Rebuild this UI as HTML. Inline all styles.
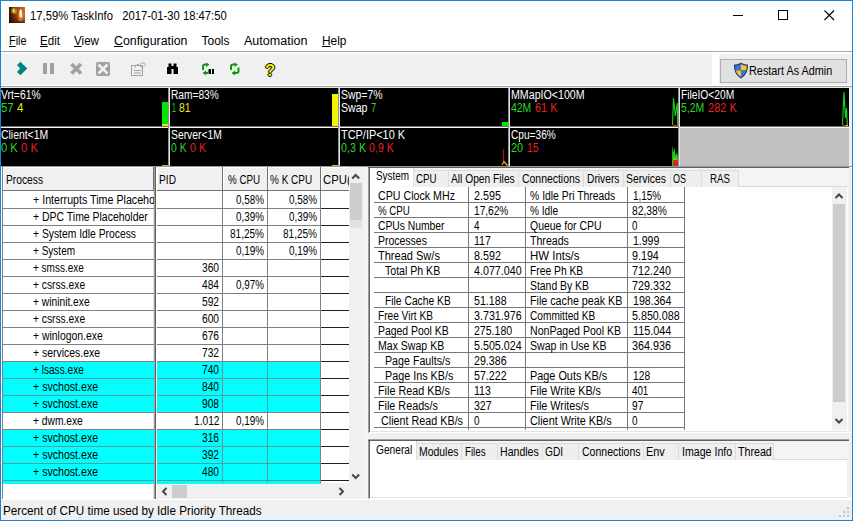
<!DOCTYPE html>
<html lang="en"><head><meta charset="utf-8"><title>TaskInfo</title>
<style>
html,body{margin:0;padding:0;}
body{width:853px;height:521px;overflow:hidden;background:#f0f0f0;font-family:'Liberation Sans',sans-serif;position:relative;}
body div,body svg{position:absolute;}
.sec{left:0;top:0;width:0;height:0;}
.t{position:absolute;white-space:pre;transform-origin:0 0;}
u{text-decoration:underline;text-underline-offset:1px;}
</style></head>
<body>
<div style="left:0px;top:0px;width:853px;height:521px;background:#1883d7;"></div>
<div style="left:1px;top:1px;width:851px;height:519px;background:#f0f0f0;"></div>
<div class="sec" id="titlebar">
<div style="left:1px;top:1px;width:851px;height:50px;background:#ffffff;"></div>
<svg style="left:9px;top:7px" width="16" height="16" viewBox="0 0 16 16">
<defs><linearGradient id="ig" x1="0" y1="0" x2="1" y2="0"><stop offset="0" stop-color="#2a1004"/><stop offset="0.45" stop-color="#9c3c12"/><stop offset="1" stop-color="#cc6830"/></linearGradient>
<linearGradient id="ih" x1="0" y1="0" x2="0" y2="1"><stop offset="0" stop-color="#000" stop-opacity="0"/><stop offset="0.65" stop-color="#000" stop-opacity="0.05"/><stop offset="1" stop-color="#200800" stop-opacity="0.6"/></linearGradient>
<radialGradient id="gl" cx="0.5" cy="0.5" r="0.5"><stop offset="0" stop-color="#ffc040" stop-opacity="0.95"/><stop offset="1" stop-color="#ff8020" stop-opacity="0"/></radialGradient>
<radialGradient id="sp" cx="0.5" cy="0.5" r="0.5"><stop offset="0" stop-color="#ffff60" stop-opacity="1"/><stop offset="1" stop-color="#e0d020" stop-opacity="0"/></radialGradient></defs>
<rect width="16" height="16" fill="url(#ig)"/>
<rect width="16" height="16" fill="url(#ih)"/>
<ellipse cx="11.700" cy="8" rx="4" ry="7" fill="url(#gl)"/>
<ellipse cx="11.700" cy="6.500" rx="1.300" ry="4.300" fill="#fff8c0"/>
<ellipse cx="11.500" cy="12.500" rx="2.500" ry="1.500" fill="#e08020" opacity="0.7"/>
<circle cx="5" cy="4" r="4" fill="url(#sp)"/><circle cx="5" cy="3.500" r="1.500" fill="#ffff50"/>
<path d="M3 3.500h1v1h-1zM5.500 2.500h1v2h-1zM3.500 6h1v1h-1z" fill="#302000" opacity="0.8"/>
</svg>
<span class="t" style="left:29.60px;top:9.00px;font-size:12px;line-height:14px;color:#000;transform:scaleX(0.9369)">17,59% TaskInfo   2017-01-30 18:47:50</span>
<svg style="left:715px;top:1px" width="137" height="30" viewBox="0 0 137 30">
<path d="M18 14.500h10" stroke="#000" stroke-width="1" fill="none"/>
<rect x="63.500" y="9.500" width="9" height="9" stroke="#000" stroke-width="1" fill="none"/>
<path d="M109.500 9.500l9.500 9.500M119 9.500l-9.500 9.500" stroke="#000" stroke-width="1.100" fill="none"/>
</svg>
</div>
<div class="sec" id="menubar">
<span class="t" style="left:8.50px;top:34.30px;font-size:12px;line-height:14px;color:#000;transform:scaleX(0.9040)"><u>F</u>ile</span>
<span class="t" style="left:40.00px;top:34.30px;font-size:12px;line-height:14px;color:#000;transform:scaleX(0.9660)"><u>E</u>dit</span>
<span class="t" style="left:74.00px;top:34.30px;font-size:12px;line-height:14px;color:#000;transform:scaleX(0.9685)"><u>V</u>iew</span>
<span class="t" style="left:113.50px;top:34.30px;font-size:12px;line-height:14px;color:#000;transform:scaleX(1.0295)"><u>C</u>onfiguration</span>
<span class="t" style="left:201.50px;top:34.30px;font-size:12px;line-height:14px;color:#000">Tools</span>
<span class="t" style="left:243.50px;top:34.30px;font-size:12px;line-height:14px;color:#000;transform:scaleX(1.0461)">Automation</span>
<span class="t" style="left:321.50px;top:34.30px;font-size:12px;line-height:14px;color:#000;transform:scaleX(0.9924)"><u>H</u>elp</span>
</div>
<div class="sec" id="toolbar">
<div style="left:1px;top:51px;width:851px;height:1px;background:#a8a8a8;"></div>
<div style="left:1px;top:52px;width:851px;height:33px;background:#f0f0f0;"></div>
<div style="left:1px;top:52px;width:851px;height:1px;background:#ffffff;"></div>
<div style="left:1px;top:53px;width:851px;height:1px;background:#f8f8f8;"></div>
<div style="left:712px;top:52px;width:7px;height:34px;background:#ffffff;"></div>
<div style="left:719px;top:52px;width:133px;height:2px;background:#ffffff;"></div>
<div style="left:1px;top:85px;width:851px;height:1px;background:#ffffff;"></div>
<div style="left:1px;top:86px;width:851px;height:1px;background:#a0a0a0;"></div>
<div style="left:1px;top:87px;width:851px;height:1px;background:#e8e8e8;"></div>
<svg style="left:0;top:52px" width="300" height="34" viewBox="0 52 300 34"><polygon points="17,65 20.5,61.8 27.2,68.5 20.5,75.2 17,71.9 20.2,68.5" fill="#008284"/><rect x="43" y="63" width="4" height="11" fill="#a0a0a0"/><rect x="50" y="63" width="4" height="11" fill="#a0a0a0"/><path d="M71.5 64l9.5 9.5M81 64l-9.5 9.5" stroke="#a0a0a0" stroke-width="3.700" fill="none"/><rect x="96" y="62" width="14" height="14" rx="2" fill="#a0a0a0"/><path d="M98.500 64.500l9 9M107.500 64.500l-9 9" stroke="#f0f0f0" stroke-width="2.700" fill="none"/><g stroke="#a0a0a0" fill="none" stroke-width="1"><rect x="131.500" y="65.500" width="11" height="10"/><path d="M134 70.500h7M134 73h7"/><path d="M134 68l4-4 4 4" /><path d="M140 64.500c2-2 4-2 5.500 0l-1.500 2"/></g><g fill="#000"><rect x="167" y="67" width="4.500" height="7"/><rect x="173.500" y="67" width="4.500" height="7"/><rect x="168.500" y="63.500" width="3" height="4"/><rect x="173.500" y="63.500" width="3" height="4"/><rect x="171" y="66" width="3" height="3"/></g><g stroke="#0c980c" stroke-width="2" fill="none"><path d="M203 70v-3.500q0-2 2-2h1.500"/><path d="M209 69.500v1.500q0 2 -2 2h-1.500"/></g><polygon points="206,62.500 209.500,64.500 206,67" fill="#0c980c"/><polygon points="206,70.500 202.500,73 206,75.500" fill="#0c980c"/><rect x="209" y="69" width="2" height="5" fill="#000"/><rect x="212" y="69" width="2" height="5" fill="#000"/><g stroke="#0c980c" stroke-width="2" fill="none"><path d="M231 70v-3.500q0-2 2-2h2"/><path d="M238.500 67.500v3.500q0 2 -2 2h-2"/></g><polygon points="234.500,62.500 238,64.500 234.500,67" fill="#0c980c"/><polygon points="235,70.500 231.500,73 235,75.500" fill="#0c980c"/></svg>
<span class="t" style="left:264.80px;top:62.00px;font-size:16px;line-height:17px;color:#f4ec00;font-weight:bold;transform:scaleX(1.0428);text-shadow:-1px 0 #000,1px 0 #000,0 -1px #000,0 1px #000">?</span>
<div style="left:720px;top:59px;width:127px;height:24px;background:#adadad;"></div>
<div style="left:721px;top:60px;width:125px;height:22px;background:#e1e1e1;"></div>
<svg style="left:733px;top:62px" width="16" height="17" viewBox="0 0 16 17">
<path d="M8 0.500 C6 2 3.500 2.600 1 2.600 C1 8 2 13 8 16.500 C14 13 15 8 15 2.600 C12.500 2.600 10 2 8 0.500Z" fill="#1d3f7a"/>
<path d="M8 2 C6.500 3 4.500 3.700 2.300 3.800 C2.300 5.500 2.400 7 2.800 8.500 L8 8.500Z" fill="#3a78d8"/>
<path d="M8 2 C9.500 3 11.500 3.700 13.700 3.800 C13.700 5.500 13.600 7 13.200 8.500 L8 8.500Z" fill="#f5c33a"/>
<path d="M2.800 8.500 C3.500 11 5 13.300 8 15 L8 8.500Z" fill="#f5c33a"/>
<path d="M13.200 8.500 C12.500 11 11 13.300 8 15 L8 8.500Z" fill="#3a78d8"/>
</svg>
<span class="t" style="left:749.00px;top:64.00px;font-size:12px;line-height:14px;color:#000;transform:scaleX(0.9050)">Restart As Admin</span>
</div>
<div class="sec" id="meters">
<div style="left:1px;top:88px;width:848px;height:78px;background:#000000;"></div>
<div style="left:1px;top:126px;width:848px;height:1px;background:#707070;"></div>
<div style="left:1px;top:127px;width:848px;height:1px;background:#f4f4f4;"></div>
<div style="left:168px;top:88px;width:1px;height:78px;background:#909090;"></div>
<div style="left:169px;top:88px;width:1px;height:78px;background:#e4e4e4;"></div>
<div style="left:338px;top:88px;width:1px;height:78px;background:#909090;"></div>
<div style="left:339px;top:88px;width:1px;height:78px;background:#e4e4e4;"></div>
<div style="left:508px;top:88px;width:1px;height:78px;background:#909090;"></div>
<div style="left:509px;top:88px;width:1px;height:78px;background:#e4e4e4;"></div>
<div style="left:678px;top:88px;width:1px;height:78px;background:#909090;"></div>
<div style="left:679px;top:88px;width:1px;height:78px;background:#e4e4e4;"></div>
<div style="left:680px;top:128px;width:169px;height:38px;background:#c0c0c0;"></div>
<span class="t" style="left:1.40px;top:88.00px;font-size:12.5px;line-height:14px;color:#ffffff;transform:scaleX(0.8280)">Vrt=61%</span>
<span class="t" style="left:1.40px;top:101.00px;font-size:12.5px;line-height:14px;color:#2ad82a;transform:scaleX(0.9061)">57</span>
<span class="t" style="left:16.60px;top:101.00px;font-size:12.5px;line-height:14px;color:#e8e820;transform:scaleX(0.9204)">4</span>
<span class="t" style="left:171.20px;top:88.00px;font-size:12.5px;line-height:14px;color:#ffffff;transform:scaleX(0.8141)">Ram=83%</span>
<span class="t" style="left:171.70px;top:101.00px;font-size:12.5px;line-height:14px;color:#2ad82a;transform:scaleX(0.5465)">1</span>
<span class="t" style="left:179.40px;top:101.00px;font-size:12.5px;line-height:14px;color:#e8e820;transform:scaleX(0.8342)">81</span>
<span class="t" style="left:340.90px;top:88.00px;font-size:12.5px;line-height:14px;color:#ffffff;transform:scaleX(0.8352)">Swp=7%</span>
<span class="t" style="left:340.90px;top:101.00px;font-size:12.5px;line-height:14px;color:#ffffff;transform:scaleX(0.8472)">Swap</span>
<span class="t" style="left:371.00px;top:101.00px;font-size:12.5px;line-height:14px;color:#2ad82a;transform:scaleX(0.7622)">7</span>
<span class="t" style="left:510.90px;top:88.00px;font-size:12.5px;line-height:14px;color:#ffffff;transform:scaleX(0.8509)">MMapIO&lt;100M</span>
<span class="t" style="left:510.90px;top:101.00px;font-size:12.5px;line-height:14px;color:#2ad82a;transform:scaleX(0.8303)">42M</span>
<span class="t" style="left:535.00px;top:101.00px;font-size:12.5px;line-height:14px;color:#e62020;transform:scaleX(0.8710)">61 K</span>
<span class="t" style="left:680.90px;top:88.00px;font-size:12.5px;line-height:14px;color:#ffffff;transform:scaleX(0.8204)">FileIO&lt;20M</span>
<span class="t" style="left:680.90px;top:101.00px;font-size:12.5px;line-height:14px;color:#2ad82a;transform:scaleX(0.8346)">5,2M</span>
<span class="t" style="left:707.60px;top:101.00px;font-size:12.5px;line-height:14px;color:#e62020;transform:scaleX(0.8846)">282 K</span>
<span class="t" style="left:1.40px;top:128.00px;font-size:12.5px;line-height:14px;color:#ffffff;transform:scaleX(0.8318)">Client&lt;1M</span>
<span class="t" style="left:1.40px;top:141.00px;font-size:12.5px;line-height:14px;color:#2ad82a;transform:scaleX(0.8899)">0 K</span>
<span class="t" style="left:21.20px;top:141.00px;font-size:12.5px;line-height:14px;color:#e62020;transform:scaleX(0.9112)">0 K</span>
<span class="t" style="left:171.20px;top:128.00px;font-size:12.5px;line-height:14px;color:#ffffff;transform:scaleX(0.8262)">Server&lt;1M</span>
<span class="t" style="left:171.20px;top:141.00px;font-size:12.5px;line-height:14px;color:#2ad82a;transform:scaleX(0.8313)">0 K</span>
<span class="t" style="left:190.00px;top:141.00px;font-size:12.5px;line-height:14px;color:#e62020;transform:scaleX(0.8580)">0 K</span>
<span class="t" style="left:340.90px;top:128.00px;font-size:12.5px;line-height:14px;color:#ffffff;transform:scaleX(0.8743)">TCP/IP&lt;10 K</span>
<span class="t" style="left:340.90px;top:141.00px;font-size:12.5px;line-height:14px;color:#2ad82a;transform:scaleX(0.8634)">0,3 K</span>
<span class="t" style="left:369.30px;top:141.00px;font-size:12.5px;line-height:14px;color:#e62020;transform:scaleX(0.8531)">0,9 K</span>
<span class="t" style="left:510.90px;top:128.00px;font-size:12.5px;line-height:14px;color:#ffffff;transform:scaleX(0.8109)">Cpu=36%</span>
<span class="t" style="left:510.90px;top:141.00px;font-size:12.5px;line-height:14px;color:#2ad82a;transform:scaleX(0.8701)">20</span>
<span class="t" style="left:526.70px;top:141.00px;font-size:12.5px;line-height:14px;color:#e62020;transform:scaleX(0.8198)">15</span>
<span class="t" style="left:541.80px;top:141.00px;font-size:12.5px;line-height:14px;color:#000090;transform:scaleX(0.4890)">1</span>
<div style="left:162px;top:102px;width:6px;height:22px;background:#00e800;"></div>
<div style="left:162px;top:124px;width:6px;height:2px;background:#e8e800;"></div>
<div style="left:332px;top:94px;width:6px;height:32px;background:#f4f400;"></div>
<div style="left:502px;top:122px;width:6px;height:4px;background:#00e800;"></div>
<div style="left:162px;top:165px;width:6px;height:1px;background:#c8c800;"></div>
<div style="left:332px;top:165px;width:6px;height:1px;background:#c8c800;"></div>
<svg style="left:0;top:88px" width="853" height="78" viewBox="0 88 853 78" fill="none"><polyline points="672.5,125 673.5,98 675.3,116 677.2,103 677.7,125" stroke="#20d020" stroke-width="1.100"/><rect x="673" y="125" width="5" height="1" fill="#e02020"/><polyline points="842.5,125 844,92 845.5,118 846.5,108 847.3,125" stroke="#20d020" stroke-width="1.100"/><rect x="843" y="125" width="3" height="1" fill="#e02020"/><rect x="846" y="125" width="2" height="1" fill="#e0e020"/><polyline points="503.500,149 503.500,163" stroke="#a01818" stroke-width="1.200"/><polyline points="502,165 504,161.500 507.500,165.500" stroke="#f0b020" stroke-width="1.200"/><polygon points="672,166 672.300,145 673.500,153 674.500,147 675.500,156 677,152 678,158 678,166" fill="#20d020"/><polygon points="673,166 673.500,160 675,158.500 677,160 678,161 678,166" fill="#e02020"/><rect x="674" y="158.500" width="2" height="1.500" fill="#d8c020"/></svg>
</div>
<div class="sec" id="process-list">
<div style="left:1px;top:166px;width:851px;height:1px;background:#989898;"></div>
<div style="left:1px;top:167px;width:1px;height:333px;background:#ffffff;"></div>
<div style="left:2px;top:167px;width:1px;height:333px;background:#808080;"></div>
<div style="left:3px;top:167px;width:151px;height:316px;background:#ffffff;"></div>
<div style="left:3px;top:483px;width:151px;height:16px;background:#ffffff;"></div>
<div style="left:153px;top:167px;width:1px;height:332px;background:#e0e0e0;"></div>
<div style="left:154px;top:167px;width:1px;height:332px;background:#a0a0a0;"></div>
<div style="left:155px;top:167px;width:1px;height:332px;background:#606060;"></div>
<div style="left:156px;top:167px;width:1px;height:332px;background:#ffffff;"></div>
<div style="left:157px;top:167px;width:192px;height:316px;background:#ffffff;"></div>
<div style="left:3px;top:167px;width:151px;height:24px;background:#f0f0f0;"></div>
<div style="left:3px;top:167px;width:151px;height:1px;background:#ffffff;"></div>
<div style="left:3px;top:167px;width:1px;height:24px;background:#ffffff;"></div>
<div style="left:3px;top:190px;width:151px;height:1px;background:#707070;"></div>
<div style="left:153px;top:167px;width:1px;height:24px;background:#707070;"></div>
<div style="left:157px;top:167px;width:66px;height:24px;background:#f0f0f0;"></div>
<div style="left:157px;top:167px;width:66px;height:1px;background:#ffffff;"></div>
<div style="left:157px;top:167px;width:1px;height:24px;background:#ffffff;"></div>
<div style="left:157px;top:190px;width:66px;height:1px;background:#707070;"></div>
<div style="left:222px;top:167px;width:1px;height:24px;background:#707070;"></div>
<div style="left:223px;top:167px;width:45px;height:24px;background:#f0f0f0;"></div>
<div style="left:223px;top:167px;width:45px;height:1px;background:#ffffff;"></div>
<div style="left:223px;top:167px;width:1px;height:24px;background:#ffffff;"></div>
<div style="left:223px;top:190px;width:45px;height:1px;background:#707070;"></div>
<div style="left:267px;top:167px;width:1px;height:24px;background:#707070;"></div>
<div style="left:268px;top:167px;width:53px;height:24px;background:#f0f0f0;"></div>
<div style="left:268px;top:167px;width:53px;height:1px;background:#ffffff;"></div>
<div style="left:268px;top:167px;width:1px;height:24px;background:#ffffff;"></div>
<div style="left:268px;top:190px;width:53px;height:1px;background:#707070;"></div>
<div style="left:320px;top:167px;width:1px;height:24px;background:#707070;"></div>
<div style="left:321px;top:167px;width:40px;height:24px;background:#f0f0f0;"></div>
<div style="left:321px;top:167px;width:40px;height:1px;background:#ffffff;"></div>
<div style="left:321px;top:167px;width:1px;height:24px;background:#ffffff;"></div>
<div style="left:321px;top:190px;width:40px;height:1px;background:#707070;"></div>
<div style="left:360px;top:167px;width:1px;height:24px;background:#707070;"></div>
<span class="t" style="left:6.00px;top:173.00px;font-size:12.5px;line-height:14px;color:#000;transform:scaleX(0.8194)">Process</span>
<span class="t" style="left:159.00px;top:173.00px;font-size:12.5px;line-height:14px;color:#000;transform:scaleX(0.8156)">PID</span>
<span class="t" style="left:227.50px;top:173.00px;font-size:12.5px;line-height:14px;color:#000;transform:scaleX(0.7832)">% CPU</span>
<span class="t" style="left:270.20px;top:173.00px;font-size:12.5px;line-height:14px;color:#000;transform:scaleX(0.7993)">% K CPU</span>
<div style="left:321px;top:168px;width:28px;height:22px;overflow:hidden">
<span class="t" style="left:2.30px;top:5.00px;font-size:12.5px;line-height:14px;color:#000;transform:scaleX(0.9063)">CPU(</span>
</div>
<div style="left:3px;top:208px;width:151px;height:1px;background:#808080;"></div>
<div style="left:157px;top:208px;width:164px;height:1px;background:#808080;"></div>
<div style="left:321px;top:208px;width:28px;height:1px;background:#202020;"></div>
<div style="left:3px;top:192px;width:151px;height:16px;overflow:hidden">
<span class="t" style="left:30.20px;top:1.00px;font-size:12.5px;line-height:14px;color:#000;transform:scaleX(0.8544)">+ Interrupts Time Placeholder</span>
</div>
<span class="t" style="left:236.10px;top:193.00px;font-size:12.5px;line-height:14px;color:#000;transform:scaleX(0.7898)">0,58%</span>
<span class="t" style="left:288.80px;top:193.00px;font-size:12.5px;line-height:14px;color:#000;transform:scaleX(0.7898)">0,58%</span>
<div style="left:3px;top:225px;width:151px;height:1px;background:#808080;"></div>
<div style="left:157px;top:225px;width:164px;height:1px;background:#808080;"></div>
<div style="left:321px;top:225px;width:28px;height:1px;background:#202020;"></div>
<div style="left:3px;top:209px;width:151px;height:16px;overflow:hidden">
<span class="t" style="left:30.20px;top:1.00px;font-size:12.5px;line-height:14px;color:#000;transform:scaleX(0.8366)">+ DPC Time Placeholder</span>
</div>
<span class="t" style="left:236.10px;top:210.00px;font-size:12.5px;line-height:14px;color:#000;transform:scaleX(0.7898)">0,39%</span>
<span class="t" style="left:288.80px;top:210.00px;font-size:12.5px;line-height:14px;color:#000;transform:scaleX(0.7898)">0,39%</span>
<div style="left:3px;top:242px;width:151px;height:1px;background:#808080;"></div>
<div style="left:157px;top:242px;width:164px;height:1px;background:#808080;"></div>
<div style="left:321px;top:242px;width:28px;height:1px;background:#202020;"></div>
<div style="left:3px;top:226px;width:151px;height:16px;overflow:hidden">
<span class="t" style="left:30.20px;top:1.00px;font-size:12.5px;line-height:14px;color:#000;transform:scaleX(0.8260)">+ System Idle Process</span>
</div>
<span class="t" style="left:230.10px;top:227.00px;font-size:12.5px;line-height:14px;color:#000;transform:scaleX(0.8018)">81,25%</span>
<span class="t" style="left:282.80px;top:227.00px;font-size:12.5px;line-height:14px;color:#000;transform:scaleX(0.8018)">81,25%</span>
<div style="left:3px;top:259px;width:151px;height:1px;background:#808080;"></div>
<div style="left:157px;top:259px;width:164px;height:1px;background:#808080;"></div>
<div style="left:321px;top:259px;width:28px;height:1px;background:#202020;"></div>
<div style="left:3px;top:243px;width:151px;height:16px;overflow:hidden">
<span class="t" style="left:30.20px;top:1.00px;font-size:12.5px;line-height:14px;color:#000;transform:scaleX(0.8026)">+ System</span>
</div>
<span class="t" style="left:236.10px;top:244.00px;font-size:12.5px;line-height:14px;color:#000;transform:scaleX(0.7898)">0,19%</span>
<span class="t" style="left:288.80px;top:244.00px;font-size:12.5px;line-height:14px;color:#000;transform:scaleX(0.7898)">0,19%</span>
<div style="left:3px;top:276px;width:151px;height:1px;background:#808080;"></div>
<div style="left:157px;top:276px;width:164px;height:1px;background:#808080;"></div>
<div style="left:321px;top:276px;width:28px;height:1px;background:#202020;"></div>
<div style="left:3px;top:260px;width:151px;height:16px;overflow:hidden">
<span class="t" style="left:30.20px;top:1.00px;font-size:12.5px;line-height:14px;color:#000;transform:scaleX(0.7992)">+ smss.exe</span>
</div>
<span class="t" style="left:202.00px;top:261.00px;font-size:12.5px;line-height:14px;color:#000;transform:scaleX(0.8150)">360</span>
<div style="left:3px;top:293px;width:151px;height:1px;background:#808080;"></div>
<div style="left:157px;top:293px;width:164px;height:1px;background:#808080;"></div>
<div style="left:321px;top:293px;width:28px;height:1px;background:#202020;"></div>
<div style="left:3px;top:277px;width:151px;height:16px;overflow:hidden">
<span class="t" style="left:30.20px;top:1.00px;font-size:12.5px;line-height:14px;color:#000;transform:scaleX(0.8197)">+ csrss.exe</span>
</div>
<span class="t" style="left:202.00px;top:278.00px;font-size:12.5px;line-height:14px;color:#000;transform:scaleX(0.8150)">484</span>
<span class="t" style="left:236.10px;top:278.00px;font-size:12.5px;line-height:14px;color:#000;transform:scaleX(0.7898)">0,97%</span>
<div style="left:3px;top:310px;width:151px;height:1px;background:#808080;"></div>
<div style="left:157px;top:310px;width:164px;height:1px;background:#808080;"></div>
<div style="left:321px;top:310px;width:28px;height:1px;background:#202020;"></div>
<div style="left:3px;top:294px;width:151px;height:16px;overflow:hidden">
<span class="t" style="left:30.20px;top:1.00px;font-size:12.5px;line-height:14px;color:#000;transform:scaleX(0.8186)">+ wininit.exe</span>
</div>
<span class="t" style="left:202.00px;top:295.00px;font-size:12.5px;line-height:14px;color:#000;transform:scaleX(0.8150)">592</span>
<div style="left:3px;top:327px;width:151px;height:1px;background:#808080;"></div>
<div style="left:157px;top:327px;width:164px;height:1px;background:#808080;"></div>
<div style="left:321px;top:327px;width:28px;height:1px;background:#202020;"></div>
<div style="left:3px;top:311px;width:151px;height:16px;overflow:hidden">
<span class="t" style="left:30.20px;top:1.00px;font-size:12.5px;line-height:14px;color:#000;transform:scaleX(0.8197)">+ csrss.exe</span>
</div>
<span class="t" style="left:202.00px;top:312.00px;font-size:12.5px;line-height:14px;color:#000;transform:scaleX(0.8150)">600</span>
<div style="left:3px;top:344px;width:151px;height:1px;background:#808080;"></div>
<div style="left:157px;top:344px;width:164px;height:1px;background:#808080;"></div>
<div style="left:321px;top:344px;width:28px;height:1px;background:#202020;"></div>
<div style="left:3px;top:328px;width:151px;height:16px;overflow:hidden">
<span class="t" style="left:30.20px;top:1.00px;font-size:12.5px;line-height:14px;color:#000;transform:scaleX(0.8322)">+ winlogon.exe</span>
</div>
<span class="t" style="left:202.00px;top:329.00px;font-size:12.5px;line-height:14px;color:#000;transform:scaleX(0.8150)">676</span>
<div style="left:3px;top:361px;width:151px;height:1px;background:#808080;"></div>
<div style="left:157px;top:361px;width:164px;height:1px;background:#808080;"></div>
<div style="left:321px;top:361px;width:28px;height:1px;background:#202020;"></div>
<div style="left:3px;top:345px;width:151px;height:16px;overflow:hidden">
<span class="t" style="left:30.20px;top:1.00px;font-size:12.5px;line-height:14px;color:#000;transform:scaleX(0.8349)">+ services.exe</span>
</div>
<span class="t" style="left:202.00px;top:346.00px;font-size:12.5px;line-height:14px;color:#000;transform:scaleX(0.8150)">732</span>
<div style="left:3px;top:362px;width:151px;height:16px;background:#00ffff;"></div>
<div style="left:157px;top:362px;width:164px;height:16px;background:#00ffff;"></div>
<div style="left:3px;top:378px;width:151px;height:1px;background:#5a9c9c;"></div>
<div style="left:157px;top:378px;width:164px;height:1px;background:#5a9c9c;"></div>
<div style="left:321px;top:378px;width:28px;height:1px;background:#202020;"></div>
<div style="left:3px;top:362px;width:151px;height:16px;overflow:hidden">
<span class="t" style="left:30.20px;top:1.00px;font-size:12.5px;line-height:14px;color:#000;transform:scaleX(0.8078)">+ lsass.exe</span>
</div>
<span class="t" style="left:202.00px;top:363.00px;font-size:12.5px;line-height:14px;color:#000;transform:scaleX(0.8150)">740</span>
<div style="left:3px;top:379px;width:151px;height:16px;background:#00ffff;"></div>
<div style="left:157px;top:379px;width:164px;height:16px;background:#00ffff;"></div>
<div style="left:3px;top:395px;width:151px;height:1px;background:#5a9c9c;"></div>
<div style="left:157px;top:395px;width:164px;height:1px;background:#5a9c9c;"></div>
<div style="left:321px;top:395px;width:28px;height:1px;background:#202020;"></div>
<div style="left:3px;top:379px;width:151px;height:16px;overflow:hidden">
<span class="t" style="left:30.20px;top:1.00px;font-size:12.5px;line-height:14px;color:#000;transform:scaleX(0.8479)">+ svchost.exe</span>
</div>
<span class="t" style="left:202.00px;top:380.00px;font-size:12.5px;line-height:14px;color:#000;transform:scaleX(0.8150)">840</span>
<div style="left:3px;top:396px;width:151px;height:16px;background:#00ffff;"></div>
<div style="left:157px;top:396px;width:164px;height:16px;background:#00ffff;"></div>
<div style="left:3px;top:412px;width:151px;height:1px;background:#808080;"></div>
<div style="left:157px;top:412px;width:164px;height:1px;background:#808080;"></div>
<div style="left:321px;top:412px;width:28px;height:1px;background:#202020;"></div>
<div style="left:3px;top:396px;width:151px;height:16px;overflow:hidden">
<span class="t" style="left:30.20px;top:1.00px;font-size:12.5px;line-height:14px;color:#000;transform:scaleX(0.8479)">+ svchost.exe</span>
</div>
<span class="t" style="left:202.00px;top:397.00px;font-size:12.5px;line-height:14px;color:#000;transform:scaleX(0.8150)">908</span>
<div style="left:3px;top:429px;width:151px;height:1px;background:#808080;"></div>
<div style="left:157px;top:429px;width:164px;height:1px;background:#808080;"></div>
<div style="left:321px;top:429px;width:28px;height:1px;background:#202020;"></div>
<div style="left:3px;top:413px;width:151px;height:16px;overflow:hidden">
<span class="t" style="left:30.20px;top:1.00px;font-size:12.5px;line-height:14px;color:#000;transform:scaleX(0.8191)">+ dwm.exe</span>
</div>
<span class="t" style="left:193.50px;top:414.00px;font-size:12.5px;line-height:14px;color:#000;transform:scaleX(0.8152)">1.012</span>
<span class="t" style="left:236.10px;top:414.00px;font-size:12.5px;line-height:14px;color:#000;transform:scaleX(0.7898)">0,19%</span>
<div style="left:3px;top:430px;width:151px;height:16px;background:#00ffff;"></div>
<div style="left:157px;top:430px;width:164px;height:16px;background:#00ffff;"></div>
<div style="left:3px;top:446px;width:151px;height:1px;background:#5a9c9c;"></div>
<div style="left:157px;top:446px;width:164px;height:1px;background:#5a9c9c;"></div>
<div style="left:321px;top:446px;width:28px;height:1px;background:#202020;"></div>
<div style="left:3px;top:430px;width:151px;height:16px;overflow:hidden">
<span class="t" style="left:30.20px;top:1.00px;font-size:12.5px;line-height:14px;color:#000;transform:scaleX(0.8479)">+ svchost.exe</span>
</div>
<span class="t" style="left:202.00px;top:431.00px;font-size:12.5px;line-height:14px;color:#000;transform:scaleX(0.8150)">316</span>
<div style="left:3px;top:447px;width:151px;height:16px;background:#00ffff;"></div>
<div style="left:157px;top:447px;width:164px;height:16px;background:#00ffff;"></div>
<div style="left:3px;top:463px;width:151px;height:1px;background:#5a9c9c;"></div>
<div style="left:157px;top:463px;width:164px;height:1px;background:#5a9c9c;"></div>
<div style="left:321px;top:463px;width:28px;height:1px;background:#202020;"></div>
<div style="left:3px;top:447px;width:151px;height:16px;overflow:hidden">
<span class="t" style="left:30.20px;top:1.00px;font-size:12.5px;line-height:14px;color:#000;transform:scaleX(0.8479)">+ svchost.exe</span>
</div>
<span class="t" style="left:202.00px;top:448.00px;font-size:12.5px;line-height:14px;color:#000;transform:scaleX(0.8150)">392</span>
<div style="left:3px;top:464px;width:151px;height:16px;background:#00ffff;"></div>
<div style="left:157px;top:464px;width:164px;height:16px;background:#00ffff;"></div>
<div style="left:3px;top:480px;width:151px;height:1px;background:#5a9c9c;"></div>
<div style="left:157px;top:480px;width:164px;height:1px;background:#5a9c9c;"></div>
<div style="left:321px;top:480px;width:28px;height:1px;background:#202020;"></div>
<div style="left:3px;top:464px;width:151px;height:16px;overflow:hidden">
<span class="t" style="left:30.20px;top:1.00px;font-size:12.5px;line-height:14px;color:#000;transform:scaleX(0.8479)">+ svchost.exe</span>
</div>
<span class="t" style="left:202.00px;top:465.00px;font-size:12.5px;line-height:14px;color:#000;transform:scaleX(0.8150)">480</span>
<div style="left:3px;top:481px;width:151px;height:3px;background:#00ffff;"></div>
<div style="left:157px;top:481px;width:164px;height:3px;background:#00ffff;"></div>
<div style="left:222px;top:191px;width:1px;height:292px;background:#808080;"></div>
<div style="left:222px;top:362px;width:1px;height:16px;background:#5a9c9c;"></div>
<div style="left:222px;top:379px;width:1px;height:16px;background:#5a9c9c;"></div>
<div style="left:222px;top:396px;width:1px;height:16px;background:#5a9c9c;"></div>
<div style="left:222px;top:430px;width:1px;height:16px;background:#5a9c9c;"></div>
<div style="left:222px;top:447px;width:1px;height:16px;background:#5a9c9c;"></div>
<div style="left:222px;top:464px;width:1px;height:16px;background:#5a9c9c;"></div>
<div style="left:222px;top:481px;width:1px;height:2px;background:#5a9c9c;"></div>
<div style="left:267px;top:191px;width:1px;height:292px;background:#808080;"></div>
<div style="left:267px;top:362px;width:1px;height:16px;background:#5a9c9c;"></div>
<div style="left:267px;top:379px;width:1px;height:16px;background:#5a9c9c;"></div>
<div style="left:267px;top:396px;width:1px;height:16px;background:#5a9c9c;"></div>
<div style="left:267px;top:430px;width:1px;height:16px;background:#5a9c9c;"></div>
<div style="left:267px;top:447px;width:1px;height:16px;background:#5a9c9c;"></div>
<div style="left:267px;top:464px;width:1px;height:16px;background:#5a9c9c;"></div>
<div style="left:267px;top:481px;width:1px;height:2px;background:#5a9c9c;"></div>
<div style="left:320px;top:191px;width:1px;height:292px;background:#808080;"></div>
<div style="left:349px;top:167px;width:15px;height:317px;background:#f0f0f0;"></div>
<div style="left:364px;top:167px;width:4px;height:333px;background:#f4f4f4;"></div>
<div style="left:350px;top:183px;width:12px;height:37px;background:#cdcdcd;"></div>
<div style="left:350px;top:220px;width:12px;height:8px;background:#e2e2e2;"></div>
<div style="left:157px;top:484px;width:207px;height:15px;background:#f0f0f0;"></div>
<div style="left:172px;top:485px;width:15px;height:13px;background:#cdcdcd;"></div>
<svg style="left:349px;top:167px" width="15" height="317" viewBox="0 0 15 317"><path d="M3.200 11.500l3.500-3.500 3.500 3.500" stroke="#484848" stroke-width="2" fill="none"/><path d="M3.200 307.500l3.500 3.500 3.500-3.500" stroke="#484848" stroke-width="2" fill="none"/></svg>
<svg style="left:157px;top:484px" width="192" height="15" viewBox="0 0 192 15"><path d="M9.500 4l-3.500 3.500 3.500 3.500" stroke="#484848" stroke-width="2" fill="none"/><path d="M182.500 4l3.500 3.500-3.500 3.500" stroke="#484848" stroke-width="2" fill="none"/></svg>
</div>
<div class="sec" id="system-panel">
<div style="left:368px;top:167px;width:1px;height:266px;background:#a0a0a0;"></div>
<div style="left:369px;top:167px;width:1px;height:265px;background:#606060;"></div>
<div style="left:369px;top:432px;width:483px;height:1px;background:#ffffff;"></div>
<div style="left:370px;top:431px;width:478px;height:1px;background:#e3e3e3;"></div>
<div style="left:368px;top:167px;width:481px;height:1px;background:#606060;"></div>
<div style="left:370px;top:168px;width:478px;height:19px;background:#f4f4f4;"></div>
<div style="left:370px;top:187px;width:478px;height:244px;background:#ffffff;"></div>
<div style="left:370px;top:186px;width:478px;height:1px;background:#dadada;"></div>
<div style="left:370px;top:168px;width:43px;height:20px;background:#ffffff;"></div>
<div style="left:413px;top:168px;width:1px;height:19px;background:#d0d0d0;"></div>
<span class="t" style="left:375.50px;top:169.30px;font-size:12.5px;line-height:14px;color:#000;transform:scaleX(0.7940)">System</span>
<div style="left:413px;top:170px;width:35.5px;height:17px;background:#dcdcdc;"></div>
<div style="left:414px;top:171px;width:33.5px;height:16px;background:#efefef;"></div>
<span class="t" style="left:415.70px;top:171.80px;font-size:12.5px;line-height:14px;color:#000;transform:scaleX(0.7763)">CPU</span>
<div style="left:447.5px;top:170px;width:71.5px;height:17px;background:#dcdcdc;"></div>
<div style="left:448.5px;top:171px;width:69.5px;height:16px;background:#efefef;"></div>
<span class="t" style="left:450.80px;top:171.80px;font-size:12.5px;line-height:14px;color:#000;transform:scaleX(0.8186)">All Open Files</span>
<div style="left:518px;top:170px;width:66px;height:17px;background:#dcdcdc;"></div>
<div style="left:519px;top:171px;width:64px;height:16px;background:#efefef;"></div>
<span class="t" style="left:521.50px;top:171.80px;font-size:12.5px;line-height:14px;color:#000;transform:scaleX(0.8345)">Connections</span>
<div style="left:583px;top:170px;width:41px;height:17px;background:#dcdcdc;"></div>
<div style="left:584px;top:171px;width:39px;height:16px;background:#efefef;"></div>
<span class="t" style="left:587.00px;top:171.80px;font-size:12.5px;line-height:14px;color:#000;transform:scaleX(0.8208)">Drivers</span>
<div style="left:623px;top:170px;width:47.5px;height:17px;background:#dcdcdc;"></div>
<div style="left:624px;top:171px;width:45.5px;height:16px;background:#efefef;"></div>
<span class="t" style="left:626.00px;top:171.80px;font-size:12.5px;line-height:14px;color:#000;transform:scaleX(0.8344)">Services</span>
<div style="left:669.5px;top:170px;width:32.5px;height:17px;background:#dcdcdc;"></div>
<div style="left:670.5px;top:171px;width:30.5px;height:16px;background:#efefef;"></div>
<span class="t" style="left:673.00px;top:171.80px;font-size:12.5px;line-height:14px;color:#000;transform:scaleX(0.7197)">OS</span>
<div style="left:701px;top:170px;width:38px;height:17px;background:#dcdcdc;"></div>
<div style="left:702px;top:171px;width:36px;height:16px;background:#efefef;"></div>
<span class="t" style="left:709.50px;top:171.80px;font-size:12.5px;line-height:14px;color:#000;transform:scaleX(0.7781)">RAS</span>
<div style="left:374px;top:202px;width:311px;height:1px;background:#787878;"></div>
<span class="t" style="left:378.30px;top:189.00px;font-size:12.5px;line-height:14px;color:#000;transform:scaleX(0.8527)">CPU Clock MHz</span>
<span class="t" style="left:473.60px;top:189.00px;font-size:12.5px;line-height:14px;color:#000;transform:scaleX(0.8599)">2.595</span>
<span class="t" style="left:530.00px;top:189.00px;font-size:12.5px;line-height:14px;color:#000;transform:scaleX(0.8313)">% Idle Pri Threads</span>
<span class="t" style="left:632.90px;top:189.00px;font-size:12.5px;line-height:14px;color:#000;transform:scaleX(0.7926)">1,15%</span>
<div style="left:374px;top:217px;width:311px;height:1px;background:#787878;"></div>
<span class="t" style="left:378.30px;top:204.00px;font-size:12.5px;line-height:14px;color:#000;transform:scaleX(0.7759)">% CPU</span>
<span class="t" style="left:474.10px;top:204.00px;font-size:12.5px;line-height:14px;color:#000;transform:scaleX(0.8112)">17,62%</span>
<span class="t" style="left:530.00px;top:204.00px;font-size:12.5px;line-height:14px;color:#000;transform:scaleX(0.8086)">% Idle</span>
<span class="t" style="left:632.40px;top:204.00px;font-size:12.5px;line-height:14px;color:#000;transform:scaleX(0.8230)">82,38%</span>
<div style="left:374px;top:232px;width:311px;height:1px;background:#787878;"></div>
<span class="t" style="left:378.30px;top:219.00px;font-size:12.5px;line-height:14px;color:#000;transform:scaleX(0.8253)">CPUs Number</span>
<span class="t" style="left:473.60px;top:219.00px;font-size:12.5px;line-height:14px;color:#000;transform:scaleX(0.7910)">4</span>
<span class="t" style="left:530.00px;top:219.00px;font-size:12.5px;line-height:14px;color:#000;transform:scaleX(0.8366)">Queue for CPU</span>
<span class="t" style="left:632.40px;top:219.00px;font-size:12.5px;line-height:14px;color:#000;transform:scaleX(0.7910)">0</span>
<div style="left:374px;top:247px;width:311px;height:1px;background:#787878;"></div>
<span class="t" style="left:378.30px;top:234.00px;font-size:12.5px;line-height:14px;color:#000;transform:scaleX(0.8379)">Processes</span>
<span class="t" style="left:474.10px;top:234.00px;font-size:12.5px;line-height:14px;color:#000;transform:scaleX(0.8426)">117</span>
<span class="t" style="left:530.00px;top:234.00px;font-size:12.5px;line-height:14px;color:#000;transform:scaleX(0.8482)">Threads</span>
<span class="t" style="left:632.90px;top:234.00px;font-size:12.5px;line-height:14px;color:#000;transform:scaleX(0.8408)">1.999</span>
<div style="left:374px;top:262px;width:311px;height:1px;background:#787878;"></div>
<span class="t" style="left:378.30px;top:249.00px;font-size:12.5px;line-height:14px;color:#000;transform:scaleX(0.8821)">Thread Sw/s</span>
<span class="t" style="left:473.60px;top:249.00px;font-size:12.5px;line-height:14px;color:#000;transform:scaleX(0.8599)">8.592</span>
<span class="t" style="left:530.00px;top:249.00px;font-size:12.5px;line-height:14px;color:#000;transform:scaleX(0.9138)">HW Ints/s</span>
<span class="t" style="left:632.40px;top:249.00px;font-size:12.5px;line-height:14px;color:#000;transform:scaleX(0.8567)">9.194</span>
<div style="left:374px;top:277px;width:311px;height:1px;background:#787878;"></div>
<span class="t" style="left:385.00px;top:264.00px;font-size:12.5px;line-height:14px;color:#000;transform:scaleX(0.8450)">Total Ph KB</span>
<span class="t" style="left:473.60px;top:264.00px;font-size:12.5px;line-height:14px;color:#000;transform:scaleX(0.8578)">4.077.040</span>
<span class="t" style="left:530.00px;top:264.00px;font-size:12.5px;line-height:14px;color:#000;transform:scaleX(0.8232)">Free Ph KB</span>
<span class="t" style="left:632.40px;top:264.00px;font-size:12.5px;line-height:14px;color:#000;transform:scaleX(0.8609)">712.240</span>
<div style="left:374px;top:292px;width:311px;height:1px;background:#787878;"></div>
<span class="t" style="left:530.00px;top:279.00px;font-size:12.5px;line-height:14px;color:#000;transform:scaleX(0.8325)">Stand By KB</span>
<span class="t" style="left:632.40px;top:279.00px;font-size:12.5px;line-height:14px;color:#000;transform:scaleX(0.8609)">729.332</span>
<div style="left:374px;top:307px;width:311px;height:1px;background:#787878;"></div>
<span class="t" style="left:384.50px;top:294.00px;font-size:12.5px;line-height:14px;color:#000;transform:scaleX(0.8235)">File Cache KB</span>
<span class="t" style="left:473.60px;top:294.00px;font-size:12.5px;line-height:14px;color:#000;transform:scaleX(0.8526)">51.188</span>
<span class="t" style="left:530.00px;top:294.00px;font-size:12.5px;line-height:14px;color:#000;transform:scaleX(0.8579)">File cache peak KB</span>
<span class="t" style="left:632.90px;top:294.00px;font-size:12.5px;line-height:14px;color:#000;transform:scaleX(0.8498)">198.364</span>
<div style="left:374px;top:322px;width:311px;height:1px;background:#787878;"></div>
<span class="t" style="left:378.30px;top:309.00px;font-size:12.5px;line-height:14px;color:#000;transform:scaleX(0.8090)">Free Virt KB</span>
<span class="t" style="left:473.60px;top:309.00px;font-size:12.5px;line-height:14px;color:#000;transform:scaleX(0.8578)">3.731.976</span>
<span class="t" style="left:530.00px;top:309.00px;font-size:12.5px;line-height:14px;color:#000;transform:scaleX(0.8102)">Committed KB</span>
<span class="t" style="left:632.40px;top:309.00px;font-size:12.5px;line-height:14px;color:#000;transform:scaleX(0.8578)">5.850.088</span>
<div style="left:374px;top:337px;width:311px;height:1px;background:#787878;"></div>
<span class="t" style="left:378.30px;top:324.00px;font-size:12.5px;line-height:14px;color:#000;transform:scaleX(0.8338)">Paged Pool KB</span>
<span class="t" style="left:473.60px;top:324.00px;font-size:12.5px;line-height:14px;color:#000;transform:scaleX(0.8432)">275.180</span>
<span class="t" style="left:530.00px;top:324.00px;font-size:12.5px;line-height:14px;color:#000;transform:scaleX(0.8457)">NonPaged Pool KB</span>
<span class="t" style="left:632.90px;top:324.00px;font-size:12.5px;line-height:14px;color:#000;transform:scaleX(0.8675)">115.044</span>
<div style="left:374px;top:352px;width:311px;height:1px;background:#787878;"></div>
<span class="t" style="left:378.30px;top:339.00px;font-size:12.5px;line-height:14px;color:#000;transform:scaleX(0.8431)">Max Swap KB</span>
<span class="t" style="left:473.60px;top:339.00px;font-size:12.5px;line-height:14px;color:#000;transform:scaleX(0.8578)">5.505.024</span>
<span class="t" style="left:530.00px;top:339.00px;font-size:12.5px;line-height:14px;color:#000;transform:scaleX(0.8480)">Swap in Use KB</span>
<span class="t" style="left:632.40px;top:339.00px;font-size:12.5px;line-height:14px;color:#000;transform:scaleX(0.8609)">364.936</span>
<div style="left:374px;top:367px;width:311px;height:1px;background:#787878;"></div>
<span class="t" style="left:384.50px;top:354.00px;font-size:12.5px;line-height:14px;color:#000;transform:scaleX(0.8543)">Page Faults/s</span>
<span class="t" style="left:473.60px;top:354.00px;font-size:12.5px;line-height:14px;color:#000;transform:scaleX(0.8526)">29.386</span>
<div style="left:374px;top:382px;width:311px;height:1px;background:#787878;"></div>
<span class="t" style="left:384.50px;top:369.00px;font-size:12.5px;line-height:14px;color:#000;transform:scaleX(0.8622)">Page Ins KB/s</span>
<span class="t" style="left:473.60px;top:369.00px;font-size:12.5px;line-height:14px;color:#000;transform:scaleX(0.8526)">57.222</span>
<span class="t" style="left:530.00px;top:369.00px;font-size:12.5px;line-height:14px;color:#000;transform:scaleX(0.8691)">Page Outs KB/s</span>
<span class="t" style="left:632.90px;top:369.00px;font-size:12.5px;line-height:14px;color:#000;transform:scaleX(0.8198)">128</span>
<div style="left:374px;top:397px;width:311px;height:1px;background:#787878;"></div>
<span class="t" style="left:378.30px;top:384.00px;font-size:12.5px;line-height:14px;color:#000;transform:scaleX(0.8636)">File Read KB/s</span>
<span class="t" style="left:474.10px;top:384.00px;font-size:12.5px;line-height:14px;color:#000;transform:scaleX(0.8426)">113</span>
<span class="t" style="left:530.00px;top:384.00px;font-size:12.5px;line-height:14px;color:#000;transform:scaleX(0.8614)">File Write KB/s</span>
<span class="t" style="left:632.40px;top:384.00px;font-size:12.5px;line-height:14px;color:#000;transform:scaleX(0.7814)">401</span>
<div style="left:374px;top:412px;width:311px;height:1px;background:#787878;"></div>
<span class="t" style="left:378.30px;top:399.00px;font-size:12.5px;line-height:14px;color:#000;transform:scaleX(0.8621)">File Reads/s</span>
<span class="t" style="left:473.60px;top:399.00px;font-size:12.5px;line-height:14px;color:#000;transform:scaleX(0.8437)">327</span>
<span class="t" style="left:530.00px;top:399.00px;font-size:12.5px;line-height:14px;color:#000;transform:scaleX(0.8609)">File Writes/s</span>
<span class="t" style="left:632.40px;top:399.00px;font-size:12.5px;line-height:14px;color:#000;transform:scaleX(0.8126)">97</span>
<div style="left:374px;top:427px;width:311px;height:1px;background:#787878;"></div>
<span class="t" style="left:381.30px;top:414.00px;font-size:12.5px;line-height:14px;color:#000;transform:scaleX(0.8615)">Client Read KB/s</span>
<span class="t" style="left:473.60px;top:414.00px;font-size:12.5px;line-height:14px;color:#000;transform:scaleX(0.7910)">0</span>
<span class="t" style="left:530.00px;top:414.00px;font-size:12.5px;line-height:14px;color:#000;transform:scaleX(0.8658)">Client Write KB/s</span>
<span class="t" style="left:632.40px;top:414.00px;font-size:12.5px;line-height:14px;color:#000;transform:scaleX(0.7910)">0</span>
<div style="left:468px;top:187px;width:1px;height:243px;background:#787878;"></div>
<div style="left:525px;top:187px;width:1px;height:243px;background:#787878;"></div>
<div style="left:627px;top:187px;width:1px;height:243px;background:#787878;"></div>
<div style="left:684px;top:187px;width:1px;height:243px;background:#787878;"></div>
<div style="left:832px;top:187px;width:15px;height:243px;background:#f0f0f0;"></div>
<div style="left:833px;top:204px;width:12px;height:198px;background:#cdcdcd;"></div>
<svg style="left:832px;top:187px" width="15" height="243" viewBox="0 0 15 243"><path d="M3.500 11l3.500-3.500 3.500 3.500" stroke="#484848" stroke-width="2" fill="none"/><path d="M3.500 232l3.500 3.500 3.500-3.500" stroke="#484848" stroke-width="2" fill="none"/></svg>
<div style="left:368px;top:439px;width:481px;height:1px;background:#a0a0a0;"></div>
<div style="left:368px;top:440px;width:481px;height:1px;background:#606060;"></div>
</div>
<div class="sec" id="detail-panel">
<div style="left:368px;top:441px;width:1px;height:58px;background:#a0a0a0;"></div>
<div style="left:369px;top:441px;width:1px;height:57px;background:#606060;"></div>
<div style="left:369px;top:498px;width:483px;height:1px;background:#ffffff;"></div>
<div style="left:370px;top:497px;width:478px;height:1px;background:#e3e3e3;"></div>
<div style="left:370px;top:441px;width:478px;height:19px;background:#f4f4f4;"></div>
<div style="left:370px;top:460px;width:477px;height:37px;background:#ffffff;"></div>
<div style="left:370px;top:459px;width:478px;height:1px;background:#dadada;"></div>
<div style="left:370px;top:441px;width:45.5px;height:20px;background:#ffffff;"></div>
<div style="left:415.5px;top:441px;width:1px;height:19px;background:#d0d0d0;"></div>
<span class="t" style="left:375.80px;top:442.70px;font-size:12.5px;line-height:14px;color:#000;transform:scaleX(0.8138)">General</span>
<div style="left:415.5px;top:443px;width:46.0px;height:17px;background:#dcdcdc;"></div>
<div style="left:416.5px;top:444px;width:44.0px;height:16px;background:#efefef;"></div>
<span class="t" style="left:418.80px;top:445.00px;font-size:12.5px;line-height:14px;color:#000;transform:scaleX(0.8339)">Modules</span>
<div style="left:460.5px;top:443px;width:37.0px;height:17px;background:#dcdcdc;"></div>
<div style="left:461.5px;top:444px;width:35.0px;height:16px;background:#efefef;"></div>
<span class="t" style="left:464.60px;top:445.00px;font-size:12.5px;line-height:14px;color:#000;transform:scaleX(0.7763)">Files</span>
<div style="left:496.5px;top:443px;width:46.0px;height:17px;background:#dcdcdc;"></div>
<div style="left:497.5px;top:444px;width:44.0px;height:16px;background:#efefef;"></div>
<span class="t" style="left:500.20px;top:445.00px;font-size:12.5px;line-height:14px;color:#000;transform:scaleX(0.8458)">Handles</span>
<div style="left:541.5px;top:443px;width:37.5px;height:17px;background:#dcdcdc;"></div>
<div style="left:542.5px;top:444px;width:35.5px;height:16px;background:#efefef;"></div>
<span class="t" style="left:545.30px;top:445.00px;font-size:12.5px;line-height:14px;color:#000;transform:scaleX(0.8141)">GDI</span>
<div style="left:578px;top:443px;width:65.70000000000005px;height:17px;background:#dcdcdc;"></div>
<div style="left:579px;top:444px;width:63.700000000000045px;height:16px;background:#efefef;"></div>
<span class="t" style="left:581.70px;top:445.00px;font-size:12.5px;line-height:14px;color:#000;transform:scaleX(0.8417)">Connections</span>
<div style="left:642.7px;top:443px;width:36.5px;height:17px;background:#dcdcdc;"></div>
<div style="left:643.7px;top:444px;width:34.5px;height:16px;background:#efefef;"></div>
<span class="t" style="left:646.30px;top:445.00px;font-size:12.5px;line-height:14px;color:#000;transform:scaleX(0.8725)">Env</span>
<div style="left:678.2px;top:443px;width:57.39999999999998px;height:17px;background:#dcdcdc;"></div>
<div style="left:679.2px;top:444px;width:55.39999999999998px;height:16px;background:#efefef;"></div>
<span class="t" style="left:682.20px;top:445.00px;font-size:12.5px;line-height:14px;color:#000;transform:scaleX(0.8497)">Image Info</span>
<div style="left:734.6px;top:443px;width:39.89999999999998px;height:17px;background:#dcdcdc;"></div>
<div style="left:735.6px;top:444px;width:37.89999999999998px;height:16px;background:#efefef;"></div>
<span class="t" style="left:738.40px;top:445.00px;font-size:12.5px;line-height:14px;color:#000;transform:scaleX(0.8533)">Thread</span>
</div>
<div class="sec" id="statusbar">
<div style="left:1px;top:499px;width:851px;height:1px;background:#ffffff;"></div>
<div style="left:1px;top:500px;width:851px;height:20px;background:#f0f0f0;"></div>
<span class="t" style="left:3.40px;top:504.40px;font-size:12px;line-height:14px;color:#000;transform:scaleX(0.9750)">Percent of CPU time used by Idle Priority Threads</span>
<svg style="left:838px;top:506px" width="13" height="13" viewBox="0 0 13 13"><g fill="#c4c4c4"><rect x="9" y="1" width="2" height="2"/><rect x="9" y="5" width="2" height="2"/><rect x="9" y="9" width="2" height="2"/><rect x="5" y="5" width="2" height="2"/><rect x="5" y="9" width="2" height="2"/><rect x="1" y="9" width="2" height="2"/></g></svg>
</div>
</body></html>
